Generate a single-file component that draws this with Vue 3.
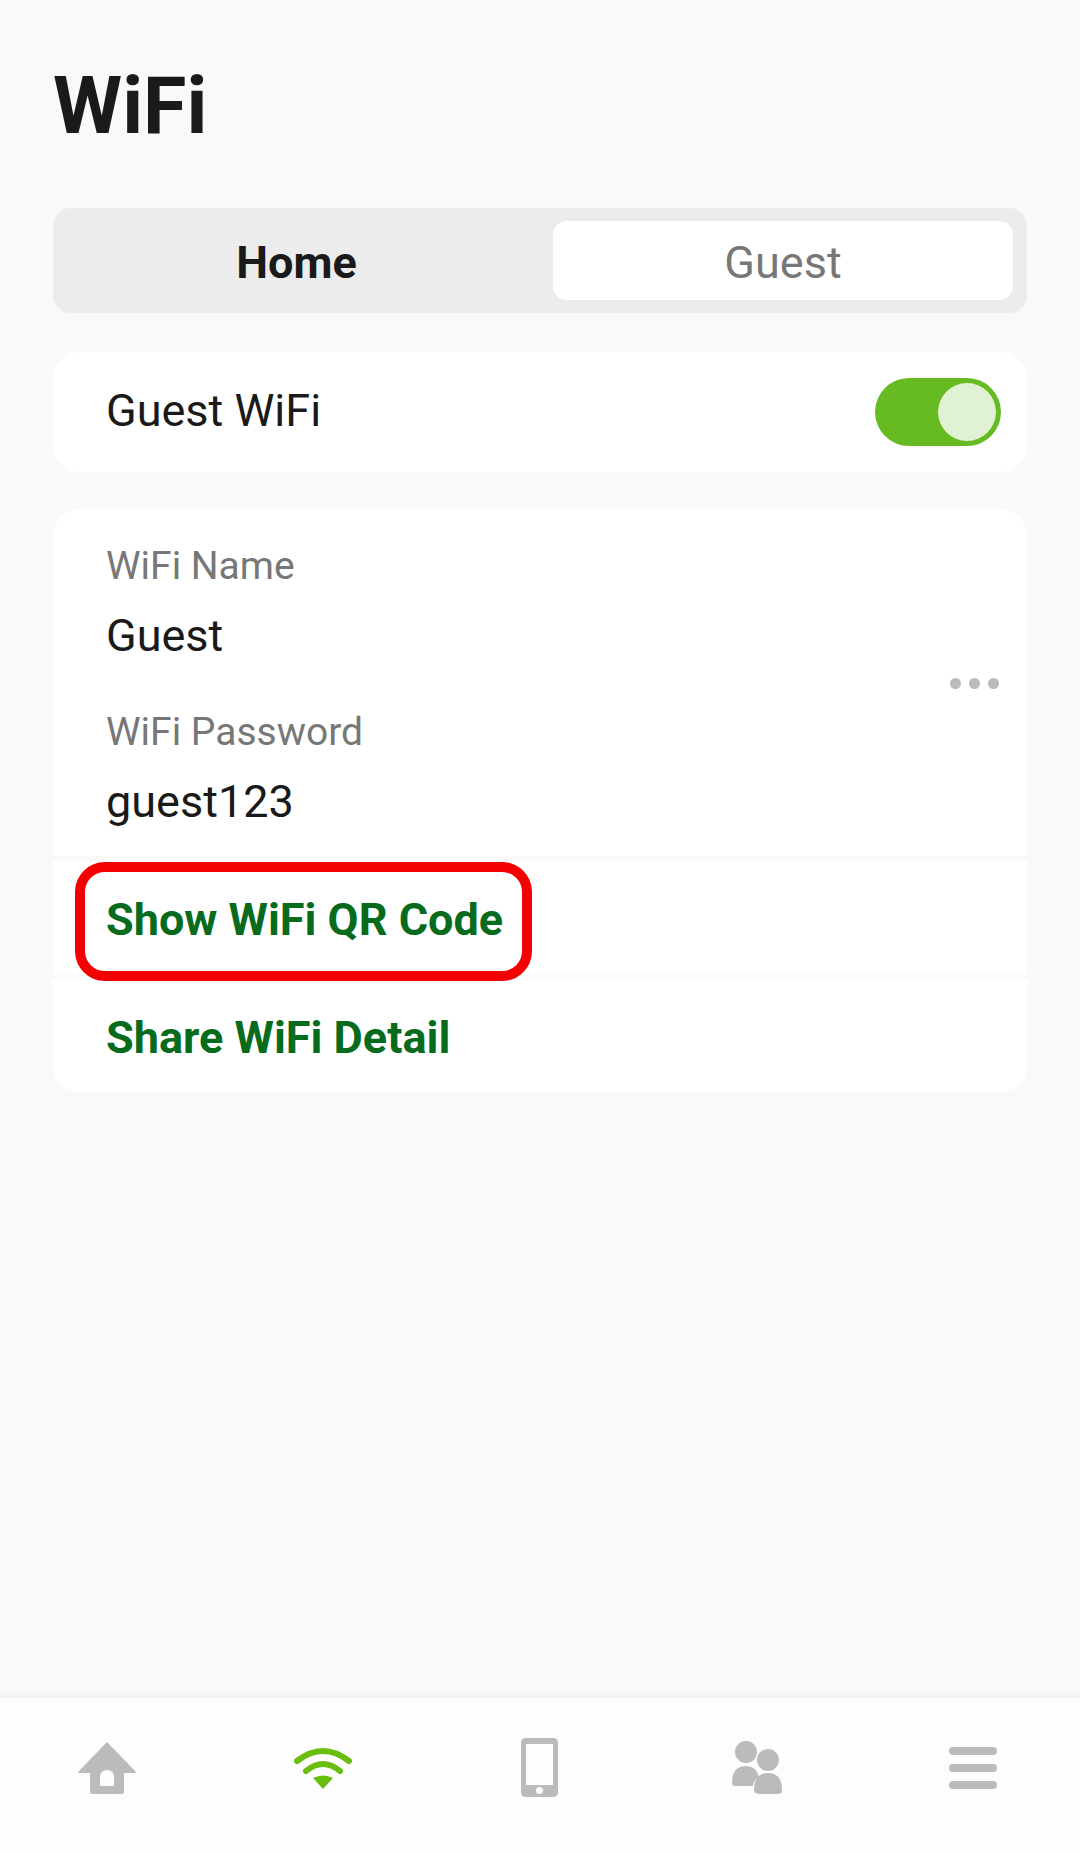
<template>
  <div class="page">
    <h1 class="title">WiFi</h1>

    <div class="tabs">
      <div class="tab tab-active">Home</div>
      <div class="tab tab-idle">Guest</div>
    </div>

    <div class="card toggle-card">
      <span class="toggle-label">Guest WiFi</span>
      <span class="switch"><span class="knob"></span></span>
    </div>

    <div class="card details-card">
      <div class="details">
        <div class="fields">
          <div class="field-label">WiFi Name</div>
          <div class="field-value">Guest</div>
          <div class="field-label second">WiFi Password</div>
          <div class="field-value">guest123</div>
        </div>
        <div class="dots"><i></i><i></i><i></i></div>
      </div>
      <div class="action first">
        <span>Show WiFi QR Code</span>
        <div class="highlight"></div>
      </div>
      <div class="action last"><span>Share WiFi Detail</span></div>
    </div>

    <nav class="nav">
      <div class="nav-item">
        <svg width="58" height="52" viewBox="0 0 58 52">
          <path fill="#bbb" fill-rule="evenodd" d="M29 0 L58 30 Q58 31 57 31 H46 V50 Q46 52 44 52 H14 Q12 52 12 50 V31 H1 Q0 31 0 30 Z M22 44 H36 V35 Q36 28 29 28 Q22 28 22 35 Z" />
        </svg>
      </div>
      <div class="nav-item">
        <svg width="58" height="42" viewBox="0 0 58 42">
          <path fill="none" stroke="#69bd0c" stroke-width="6" stroke-linecap="round" d="M3 14 Q29 -6 55 14" />
          <path fill="none" stroke="#69bd0c" stroke-width="6" stroke-linecap="round" d="M12 24 Q29 10 46 24" />
          <path fill="#69bd0c" d="M19 31 Q29 26 39 31 L29 42 Z" />
        </svg>
      </div>
      <div class="nav-item">
        <svg width="37" height="59" viewBox="0 0 37 59">
          <path fill="#bbb" fill-rule="evenodd" d="M5 0 H32 Q37 0 37 5 V54 Q37 59 32 59 H5 Q0 59 0 54 V5 Q0 0 5 0 Z M5 6 V47 H32 V6 Z M18.5 49 A3.5 3.5 0 1 0 18.5 56 A3.5 3.5 0 1 0 18.5 49 Z" />
        </svg>
      </div>
      <div class="nav-item">
        <svg width="50" height="53" viewBox="0 0 50 53">
          <circle cx="14" cy="11" r="11" fill="#bbb" />
          <circle cx="36" cy="19" r="11" fill="#bbb" />
          <path fill="#bbb" d="M0 42 Q0 25 14 25 Q24 25 27 36 Q22 38 21 45 H3 Q0 45 0 42 Z" />
          <path fill="#bbb" d="M22 49 Q22 32 36 32 Q50 32 50 49 Q50 53 46 53 H28 Q22 53 22 49 Z" />
        </svg>
      </div>
      <div class="nav-item">
        <div class="bars"><i></i><i></i><i></i></div>
      </div>
    </nav>
  </div>
</template>

<script setup>
</script>

<style>
  body {
    margin: 0;
    background: #f9f9f9;
  }
</style>

<style scoped>
  .page {
    display: flex;
    flex-direction: column;
    min-height: 1853px;
    box-sizing: border-box;
    padding-top: 64px;
    background: #f9f9f9;
    color: #1a1a1a;
    font-family: Roboto, "Noto Sans", sans-serif;
  }

  .title {
    margin: 0 0 60px 53px;
    font-size: 79px;
    line-height: 84px;
    font-weight: 700;
  }

  .tabs {
    display: flex;
    height: 105px;
    margin: 0 53px;
    padding: 13px 14px 13px 0;
    box-sizing: border-box;
    background: #ececec;
    border-radius: 18px;
  }

  .tab {
    display: flex;
    align-items: center;
    justify-content: center;
    padding-top: 3px;
    box-sizing: border-box;
    font-size: 45px;
    border-radius: 14px;
  }

  .tab-active {
    flex: 0 0 487px;
    font-weight: 700;
  }

  .tab-idle {
    flex: 0 0 460px;
    margin-left: 13px;
    background: #fff;
    color: #777;
  }

  .card {
    margin: 39px 53px 0;
    background: #fff;
    border-radius: 26px;
  }

  .toggle-card {
    display: flex;
    align-items: center;
    justify-content: space-between;
    height: 120px;
    padding: 0 26px 0 53px;
    font-size: 45px;
  }

  .toggle-label {
    margin-top: -3px;
  }

  .switch {
    display: flex;
    justify-content: flex-end;
    align-items: center;
    width: 126px;
    height: 68px;
    padding: 0 5px;
    box-sizing: border-box;
    background: #66bb22;
    border-radius: 34px;
  }

  .knob {
    width: 58px;
    height: 58px;
    background: #e1f1d3;
    border-radius: 50%;
  }

  .details-card {
    margin-top: 37px;
  }

  .details {
    display: flex;
    align-items: center;
    justify-content: space-between;
    height: 347px;
    padding: 0 28px 0 53px;
  }

  .fields {
    padding-top: 6px;
  }

  .field-label {
    font-size: 39px;
    line-height: 50px;
    color: #777;
  }

  .field-label.second {
    margin-top: 43px;
  }

  .field-value {
    margin-top: 17px;
    font-size: 45px;
    line-height: 56px;
  }

  .dots {
    display: flex;
    gap: 8px;
    margin-top: 2px;
  }

  .dots i {
    width: 11px;
    height: 11px;
    background: #bbb;
    border-radius: 50%;
  }

  .action {
    position: relative;
    padding-left: 53px;
    border-top-style: solid;
    border-top-color: #f9f9f9;
    font-size: 45px;
    line-height: 118px;
    font-weight: 700;
    color: #066b1c;
  }

  .action.first {
    height: 114px;
    border-top-width: 5px;
  }

  .action.last {
    height: 113px;
    border-top-width: 4px;
  }

  .highlight {
    position: absolute;
    left: 22px;
    top: 1px;
    width: 457px;
    height: 119px;
    box-sizing: border-box;
    border: 10px solid #f40000;
    border-radius: 30px;
    z-index: 1;
  }

  .nav {
    display: flex;
    align-items: center;
    height: 155px;
    margin-top: auto;
    padding-bottom: 16px;
    box-sizing: border-box;
    background: #fdfdfd;
    box-shadow: 0 -2px 5px rgba(0, 0, 0, 0.05);
  }

  .nav-item {
    flex: 1;
    display: flex;
    justify-content: center;
    align-items: center;
  }

  .nav-item:nth-child(-n+3) > * {
    margin-left: -2px;
  }

  .nav-item:nth-child(n+4) > * {
    margin-left: 2px;
  }

  .bars {
    display: flex;
    flex-direction: column;
    gap: 9px;
    width: 48px;
  }

  .bars i {
    height: 8px;
    background: #bbb;
    border-radius: 4px;
  }
</style>
